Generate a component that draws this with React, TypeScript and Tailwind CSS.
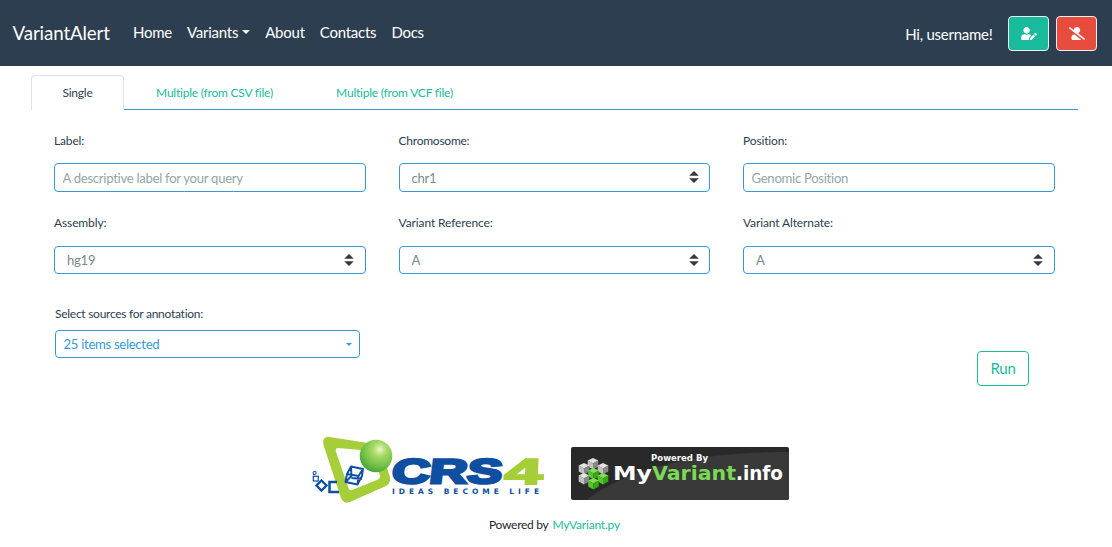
import React from "react";
import { FaUserEdit, FaUserSlash } from "react-icons/fa";

const fieldBase =
  "block w-full rounded-[4px] border border-[#3498db] bg-white text-[13.125px] leading-[19px] tracking-[-0.28px] outline-none";

function TextField({ label, placeholder }: { label: string; placeholder: string }) {
  return (
    <label className="block">
      <span className="block h-[18px] text-[12px] leading-[18px] tracking-[-0.15px]">{label}</span>
      <input
        placeholder={placeholder}
        className={`${fieldBase} mt-[13px] h-[29px] px-[7.5px] placeholder:text-[#95a5a6]`}
      />
    </label>
  );
}

function SelectField({ label, value, tall }: { label: string; value: string; tall?: boolean }) {
  return (
    <label className="block">
      <span className={`block h-[18px] text-[12px] leading-[18px] ${tall ? "tracking-[-0.25px]" : "tracking-[-0.12px]"}`}>
        {label}
      </span>
      <span className={`relative block ${tall ? "mt-[13px]" : "mt-[14px]"}`}>
        <select
          className={`${fieldBase} ${tall ? "h-[29px] pt-[2px]" : "h-[28px]"} appearance-none pr-8 pl-[12px] text-[#7b8a8b]`}
        >
          <option>{value}</option>
        </select>
        <svg viewBox="0 0 4 5" className="pointer-events-none absolute top-[8px] right-[11.6px] h-[12px] w-[10px]">
          <path fill="#343a40" d="M2 0L0 2h4zm0 5L0 3h4z" />
        </svg>
      </span>
    </label>
  );
}

function Caret({ className }: { className: string }) {
  return <span className={`inline-block h-0 w-0 border-x-transparent ${className}`} />;
}

function FileTab({ kind }: { kind: string }) {
  return (
    <button className="w-[180px] border-b border-[#3498db] pt-[2px] pl-px text-[#18bc9c]">
      Multiple (from {kind} file)
    </button>
  );
}

function Crs4Logo() {
  return (
    <svg width="234" height="68" viewBox="0 0 234 68" aria-label="CRS4">
      <defs>
        <radialGradient id="ball" cx="0.62" cy="0.3" r="0.7">
          <stop offset="0" stopColor="#e9f7c8" />
          <stop offset="0.3" stopColor="#a8da68" />
          <stop offset="0.75" stopColor="#70bf44" />
          <stop offset="1" stopColor="#48a83c" />
        </radialGradient>
      </defs>
      <path
        fillRule="evenodd"
        d="M17 0.8L63 8L75 29L79 41Q80 47 75 50L40 65.5Q33 69 30 62L12.5 9Q11 1 17 0.8ZM27 12Q24 12 25 16L37.5 52Q38.5 55 41 54L67 43.5Q69.5 42.5 69 40L62 15Z"
        fill="#a6ce39"
      />
      <g fill="none" stroke="#0f4fa1" strokeWidth="2">
        <path d="M26 46H18.5V56H28" strokeWidth="2.5" />
        <path d="M10.5 44.5L15.5 49.5L10.5 54.5L5.5 49.5Z" strokeWidth="2.3" />
        <rect x="2.3" y="40.3" width="5" height="4.7" strokeWidth="1.2" />
        <path d="M2 36L4.8 35.2L5 38L2.5 39Z" strokeWidth="1" />
        <path
          d="M40 30.5L52 33L51 40L46.5 48.5L34.5 46L36 38ZM36 38L47.5 40L52 33M47.5 40L46.5 48.5M40 30.5L40.5 40L34.5 46M40.5 42L51 43"
          strokeWidth="1.9"
          strokeLinejoin="round"
        />
      </g>
      <circle cx="65" cy="20" r="16.3" fill="url(#ball)" />
      <g fontFamily="Liberation Sans, sans-serif" fontWeight="700">
        <text
          transform="translate(80 46.5) skewX(-7)"
          fontSize="34"
          textLength="110"
          lengthAdjust="spacingAndGlyphs"
          fill="#0f4fa1"
          stroke="#0f4fa1"
          strokeWidth="2.8"
        >
          CRS
        </text>
        <text
          transform="translate(193 47.5) skewX(-3)"
          fontSize="36"
          textLength="38"
          lengthAdjust="spacingAndGlyphs"
          fill="#a6ce39"
          stroke="#a6ce39"
          strokeWidth="2"
        >
          4
        </text>
        <text x="81" y="58" fontSize="7.5" fontFamily="DejaVu Sans, sans-serif" textLength="147" fill="#0f4fa1">
          IDEAS BECOME LIFE
        </text>
      </g>
    </svg>
  );
}

const cubes: { x: number; y: number; green?: boolean }[] = [
  { x: 22, y: 16.5 },
  { x: 13, y: 21.5 },
  { x: 32, y: 21.5 },
  { x: 13, y: 31.5 },
  { x: 22.5, y: 26.5, green: true },
  { x: 32, y: 31.5, green: true },
  { x: 22.5, y: 36.5, green: true },
];

function MyVariantLogo() {
  return (
    <svg width="218" height="53" viewBox="0 0 218 53" aria-label="MyVariant.info">
      <defs>
        <clipPath id="badge">
          <rect width="218" height="53" rx="2" />
        </clipPath>
      </defs>
      <g clipPath="url(#badge)">
        <rect width="218" height="53" fill="#292929" />
        <path d="M15 53C60 20 125 5 218 5V53Z" fill="#393939" />
      </g>
      {cubes.map((c) => (
        <g key={`${c.x}-${c.y}`} transform={`translate(${c.x} ${c.y})`}>
          <path d="M0 -5.5L5.3 -3L0 0L-5.3 -3Z" fill={c.green ? "#83de54" : "#e3e3e3"} />
          <path d="M-5.3 -3L0 0V6L-5.3 3Z" fill={c.green ? "#55c72c" : "#c1c1c1"} />
          <path d="M5.3 -3L0 0V6L5.3 3Z" fill={c.green ? "#37a713" : "#888888"} />
        </g>
      ))}
      <g fontWeight="700" fontFamily="DejaVu Sans, sans-serif">
        <text x="80" y="14" fontSize="8.5" textLength="57" lengthAdjust="spacingAndGlyphs" fill="#fff">
          Powered By
        </text>
        <text x="42" y="32.5" fontSize="19.5" textLength="39" lengthAdjust="spacingAndGlyphs" fill="#fff">
          My
        </text>
        <text x="81" y="32.5" fontSize="19.5" textLength="84" lengthAdjust="spacingAndGlyphs" fill="#7cd857">
          Variant
        </text>
        <text x="165" y="32.5" fontSize="19.5" textLength="47" lengthAdjust="spacingAndGlyphs" fill="#fff">
          .info
        </text>
      </g>
    </svg>
  );
}

export default function App() {
  return (
    <div className="flex h-[547px] flex-col overflow-hidden bg-white font-['Lato',sans-serif] text-[15px] text-[#2c3e50]">
      <nav className="flex h-[66px] shrink-0 items-center bg-[#2c3e50] pr-[15px] pl-[12.5px] text-white">
        <a className="mr-[23px] text-[18.75px] leading-7 tracking-[-0.12px]">VariantAlert</a>
        <div className="flex flex-1 items-center gap-[15px] pb-[2px] leading-[22px] tracking-[-0.24px]">
          <a>Home</a>
          <a className="flex items-center">
            Variants
            <Caret className="ml-[4px] border-x-[4.5px] border-t-[4.5px] border-t-white" />
          </a>
          <a>About</a>
          <a>Contacts</a>
          <a>Docs</a>
        </div>
        <span className="mr-[15.5px] pt-px leading-[22px] tracking-[-0.25px]">Hi, username!</span>
        <div className="flex gap-[7px]">
          <button className="flex h-[35px] w-[41px] items-center justify-center rounded-[4px] border border-[#ecf0f1] bg-[#18bc9c]">
            <FaUserEdit size={13.125} className="h-[13px] w-[16px]" />
          </button>
          <button className="flex h-[35px] w-[41px] items-center justify-center rounded-[4px] border border-[#ecf0f1] bg-[#e74c3c]">
            <FaUserSlash size={13.125} className="h-[13px] w-[16px]" />
          </button>
        </div>
      </nav>

      <div className="mt-[9px] mr-[34px] ml-[31px] flex h-[35px] shrink-0 text-[12px] leading-[18px] tracking-[-0.22px]">
        <button className="w-[93px] rounded-t-[4px] border border-b-0 border-[#dee2e6] pb-px">Single</button>
        <FileTab kind="CSV" />
        <FileTab kind="VCF" />
        <div className="flex-1 border-b border-[#3498db]" />
      </div>

      <form className="mt-[22px] shrink-0">
        <div className="mr-[57px] ml-[54px] grid grid-cols-[312px_311.8px_312px] justify-between">
          <TextField label="Label:" placeholder="A descriptive label for your query" />
          <SelectField label="Chromosome:" value="chr1" tall />
          <TextField label="Position:" placeholder="Genomic Position" />
        </div>
        <div className="mt-[22px] mr-[57px] ml-[54px] grid grid-cols-[312px_311.8px_312px] justify-between">
          <SelectField label="Assembly:" value="hg19" />
          <SelectField label="Variant Reference:" value="A" />
          <SelectField label="Variant Alternate:" value="A" />
        </div>
        <div className="mt-[31px] mr-[83px] ml-[55px] flex items-start justify-between">
          <div className="w-[305px]">
            <div className="text-[12px] leading-[18px] tracking-[-0.27px]">Select sources for annotation:</div>
            <button
              type="button"
              className="mt-[7px] flex h-[28px] w-full items-center justify-between rounded-[4px] border border-[#3498db] pr-[7px] pl-[7.5px] text-[13.125px] leading-[19px] tracking-[-0.3px] text-[#3498db]"
            >
              25 items selected
              <Caret className="border-x-[3px] border-t-[3px] border-t-[#3498db]" />
            </button>
          </div>
          <button
            type="button"
            className="mt-[46px] h-[35px] w-[52px] rounded-[4px] border border-[#18bc9c] text-[15px] tracking-[-0.2px] text-[#18bc9c]"
          >
            Run
          </button>
        </div>
      </form>

      <footer className="mt-[50px] shrink-0">
        <div className="ml-[311px] flex items-center gap-[26px]">
          <Crs4Logo />
          <div className="pt-[7px]">
            <MyVariantLogo />
          </div>
        </div>
        <p className="mt-[12px] ml-[489px] flex gap-[4px] text-[12px] leading-[18px] tracking-[-0.28px] text-[#212529]">
          Powered by <a className="tracking-[-0.2px] text-[#18bc9c]">MyVariant.py</a>
        </p>
      </footer>
    </div>
  );
}
